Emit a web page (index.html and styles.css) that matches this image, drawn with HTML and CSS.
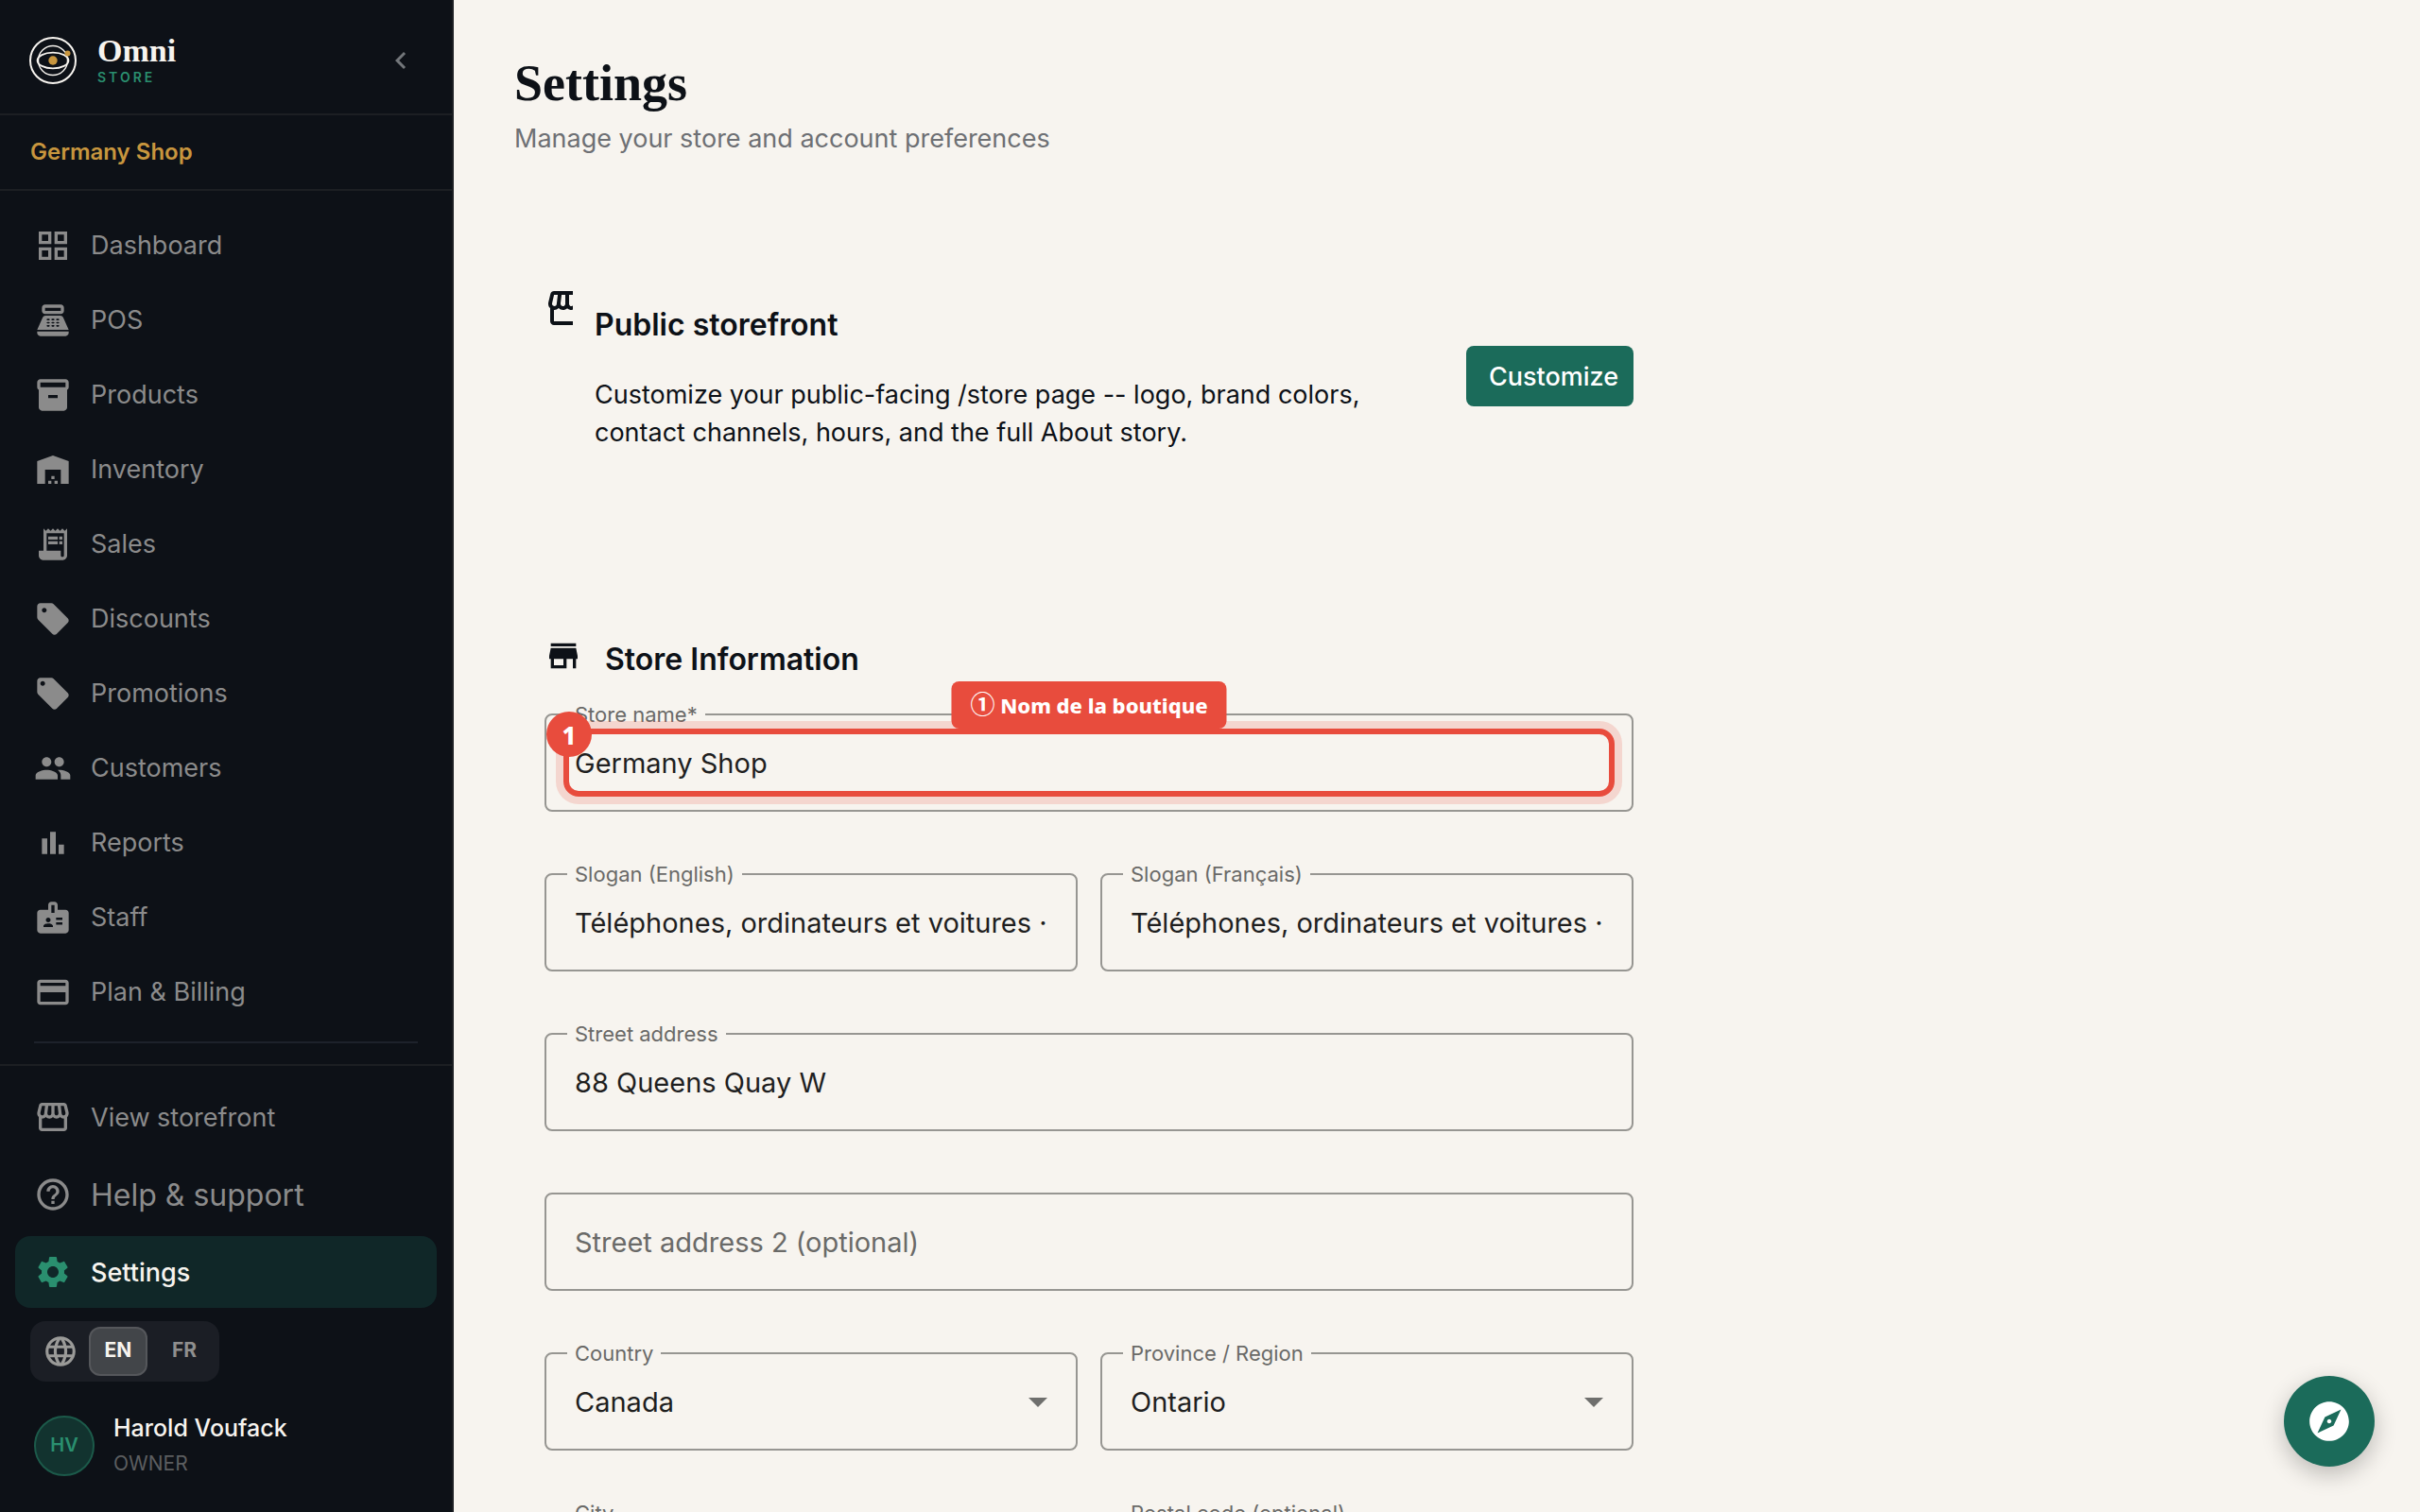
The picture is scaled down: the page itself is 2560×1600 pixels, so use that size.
FILE: index.html
```html
<!DOCTYPE html>
<html lang="en">
<head>
<meta charset="utf-8">
<title>Settings - Omni Store</title>
<link rel="stylesheet" href="styles.css">
</head>
<body>
<div class="app">
  <aside class="sidebar">
    <header class="brand">
      <svg class="brand-logo" viewBox="0 0 50 50" fill="none" stroke="#f7f4ef" aria-hidden="true">
        <circle cx="25" cy="25" r="24" stroke-width="2"/>
        <circle cx="25" cy="25" r="15.5" stroke-width="1.4"/>
        <ellipse cx="25" cy="25" rx="16.5" ry="8.3" stroke-width="1.7"/>
        <circle cx="25" cy="25" r="4.7" fill="#c8963e" stroke="none"/>
        <circle cx="40.5" cy="17.5" r="3" fill="#c8963e" stroke="none"/>
      </svg>
      <div class="brand-text">
        <span class="brand-name">Omni</span>
        <span class="brand-sub">STORE</span>
      </div>
      <button class="collapse" type="button" aria-label="Collapse sidebar">
        <svg class="icon-chevron" viewBox="0 0 24 24"><path d="M15.41 7.41L14 6l-6 6 6 6 1.41-1.41L10.83 12z"/></svg>
      </button>
    </header>
    <div class="shop">Germany Shop</div>
    <nav class="nav" aria-label="Main">
      <a class="nav-item" href="#"><svg class="icon" viewBox="0 0 24 24"><path d="M3 3v8h8V3H3zm6 6H5V5h4v4zm-6 4v8h8v-8H3zm6 6H5v-4h4v4zm4-16v8h8V3h-8zm6 6h-4V5h4v4zm-6 4v8h8v-8h-8zm6 6h-4v-4h4v4z"/></svg>Dashboard</a>
      <a class="nav-item" href="#"><svg class="icon" viewBox="0 0 24 24"><path d="M17 2H7c-1.100 0-2 .9-2 2v2c0 1.100.9 2 2 2h10c1.100 0 2-.9 2-2V4c0-1.100-.9-2-2-2zm0 4H7V4h10v2zM20 22H4c-1.100 0-2-.9-2-2v-1h20v1c0 1.100-.9 2-2 2zM18.530 10.190C18.210 9.470 17.490 9 16.700 9H7.300c-.79 0-1.510.47-1.830 1.190L2 18h20l-3.470-7.810zM9.500 16h-1c-.28 0-.5-.22-.5-.5s.22-.5.5-.5h1c.28 0 .5.22.5.5s-.22.5-.5.5zm0-2h-1c-.28 0-.5-.22-.5-.5s.22-.5.5-.5h1c.28 0 .5.22.5.5s-.22.5-.5.5zm0-2h-1c-.28 0-.5-.22-.5-.5s.22-.5.5-.5h1c.28 0 .5.22.5.5s-.22.5-.5.5zm3 4h-1c-.28 0-.5-.22-.5-.5s.22-.5.5-.5h1c.28 0 .5.22.5.5s-.22.5-.5.5zm0-2h-1c-.28 0-.5-.22-.5-.5s.22-.5.5-.5h1c.28 0 .5.22.5.5s-.22.5-.5.5zm0-2h-1c-.28 0-.5-.22-.5-.5s.22-.5.5-.5h1c.28 0 .5.22.5.5s-.22.5-.5.5zm3 4h-1c-.28 0-.5-.22-.5-.5s.22-.5.5-.5h1c.28 0 .5.22.5.5s-.22.5-.5.5zm0-2h-1c-.28 0-.5-.22-.5-.5s.22-.5.5-.5h1c.28 0 .5.22.5.5s-.22.5-.5.5zm0-2h-1c-.28 0-.5-.22-.5-.5s.22-.5.5-.5h1c.28 0 .5.22.5.5s-.22.5-.5.5z"/></svg>POS</a>
      <a class="nav-item" href="#"><svg class="icon" viewBox="0 0 24 24"><path d="M20 2H4c-1 0-2 .9-2 2v3.010c0 .72.43 1.340 1 1.690V20c0 1.100 1.100 2 2 2h14c.9 0 2-.9 2-2V8.700c.57-.35 1-.97 1-1.690V4c0-1.100-1-2-2-2zm-5 12H9v-2h6v2zm5-7H4V4h16v3z"/></svg>Products</a>
      <a class="nav-item" href="#"><svg class="icon" viewBox="0 0 24 24"><path d="M2 21V6.600L12 3l10 3.600V21h-5v-9H7v9zM11 16h2v2h-2zM9 19h2v2H9zM13 19h2v2h-2z"/></svg>Inventory</a>
      <a class="nav-item" href="#"><svg class="icon" viewBox="0 0 24 24"><path d="M19.500 3.500L18 2l-1.500 1.500L15 2l-1.500 1.500L12 2l-1.500 1.500L9 2 7.500 3.500 6 2v14H3v3c0 1.660 1.340 3 3 3h12c1.660 0 3-1.340 3-3V2l-1.500 1.500zM19 19c0 .55-.45 1-1 1s-1-.45-1-1v-3H8V5h11v14zM9 7h6v2H9zM16 7h2v2h-2zM9 10h6v2H9zM16 10h2v2h-2z"/></svg>Sales</a>
      <a class="nav-item" href="#"><svg class="icon" viewBox="0 0 24 24"><path d="M21.410 11.580l-9-9C12.050 2.220 11.550 2 11 2H4c-1.100 0-2 .9-2 2v7c0 .55.22 1.050.59 1.420l9 9c.36.36.86.58 1.410.58s1.050-.22 1.410-.59l7-7c.37-.36.59-.86.59-1.410s-.23-1.060-.59-1.420zM6.500 8C5.670 8 5 7.330 5 6.500S5.670 5 6.500 5 8 5.670 8 6.500 7.330 8 6.500 8z"/></svg>Discounts</a>
      <a class="nav-item" href="#"><svg class="icon" viewBox="0 0 24 24"><path d="M21.410 11.580l-9-9C12.050 2.220 11.550 2 11 2H4c-1.100 0-2 .9-2 2v7c0 .55.22 1.050.59 1.420l9 9c.36.36.86.58 1.410.58s1.050-.22 1.410-.59l7-7c.37-.36.59-.86.59-1.410s-.23-1.060-.59-1.420zM5.500 7C4.670 7 4 6.330 4 5.500S4.670 4 5.500 4 7 4.670 7 5.500 6.330 7 5.500 7z"/></svg>Promotions</a>
      <a class="nav-item" href="#"><svg class="icon" viewBox="0 0 24 24"><path d="M16 11c1.660 0 2.990-1.340 2.990-3S17.660 5 16 5s-3 1.340-3 3 1.340 3 3 3zm-8 0c1.660 0 2.990-1.340 2.990-3S9.660 5 8 5 5 6.340 5 8s1.340 3 3 3zm0 2c-2.330 0-7 1.170-7 3.500V19h14v-2.500c0-2.330-4.670-3.500-7-3.500zm8 0c-.29 0-.62.02-.97.05 1.160.84 1.970 1.970 1.970 3.450V19h6v-2.500c0-2.330-4.670-3.500-7-3.500z"/></svg>Customers</a>
      <a class="nav-item" href="#"><svg class="icon" viewBox="0 0 24 24"><path d="M5 9.200h3.400V19H5zM10.200 5h3.600v14h-3.600zM15.600 13H19v6h-3.400z"/></svg>Reports</a>
      <a class="nav-item" href="#"><svg class="icon" viewBox="0 0 24 24"><path d="M20 7h-5V4c0-1.100-.9-2-2-2h-2c-1.100 0-2 .9-2 2v3H4c-1.100 0-2 .9-2 2v11c0 1.100.9 2 2 2h16c1.100 0 2-.9 2-2V9c0-1.100-.9-2-2-2zM9 12c.83 0 1.500.67 1.500 1.500S9.830 15 9 15s-1.500-.67-1.500-1.500S8.170 12 9 12zm3 6H6v-.75c0-1 2-1.500 3-1.500s3 .5 3 1.500V18zm1-9h-2V4h2v5zm5 7.500h-4V15h4v1.500zm0-3h-4V12h4v1.500z"/></svg>Staff</a>
      <a class="nav-item" href="#"><svg class="icon" viewBox="0 0 24 24"><path d="M20 4H4c-1.110 0-1.990.89-1.990 2L2 18c0 1.110.89 2 2 2h16c1.110 0 2-.89 2-2V6c0-1.110-.89-2-2-2zm0 14H4v-6h16v6zm0-10H4V6h16v2z"/></svg>Plan &amp; Billing</a>
      <hr class="nav-divider">
    </nav>
    <div class="sidebar-foot">
      <nav class="foot-nav" aria-label="Secondary">
        <a class="nav-item" href="#"><svg class="icon" viewBox="0 0 24 24"><use href="#storefront"/></svg>View storefront</a>
        <a class="nav-item nav-help" href="#"><svg class="icon" viewBox="0 0 24 24"><path d="M11 18h2v-2h-2v2zm1-16C6.480 2 2 6.480 2 12s4.480 10 10 10 10-4.480 10-10S17.520 2 12 2zm0 18c-4.410 0-8-3.590-8-8s3.590-8 8-8 8 3.590 8 8-3.590 8-8 8zm0-14c-2.210 0-4 1.790-4 4h2c0-1.100.9-2 2-2s2 .9 2 2c0 2-3 1.750-3 5h2c0-2.250 3-2.500 3-5 0-2.210-1.790-4-4-4z"/></svg>Help &amp; support</a>
        <a class="nav-item active" href="#" aria-current="page"><svg class="icon" viewBox="0 0 24 24"><path d="M19.140 12.940c.04-.3.06-.61.06-.94 0-.32-.02-.64-.07-.94l2.030-1.580c.18-.14.23-.41.12-.61l-1.920-3.320c-.12-.22-.37-.29-.59-.22l-2.390.96c-.5-.38-1.030-.7-1.620-.94l-.36-2.540c-.04-.24-.24-.41-.48-.41h-3.840c-.24 0-.43.17-.47.41l-.36 2.540c-.59.24-1.130.57-1.620.94l-2.390-.96c-.22-.08-.47 0-.59.22L2.740 8.870c-.12.21-.08.47.12.61l2.030 1.580c-.05.3-.09.63-.09.94s.02.64.07.94l-2.030 1.580c-.18.14-.23.41-.12.61l1.920 3.320c.12.22.37.29.59.22l2.390-.96c.5.38 1.030.7 1.620.94l.36 2.540c.05.24.24.41.48.41h3.840c.24 0 .44-.17.47-.41l.36-2.540c.59-.24 1.130-.56 1.620-.94l2.390.96c.22.08.47 0 .59-.22l1.920-3.320c.12-.22.07-.47-.12-.61l-2.010-1.580zM12 15.600c-1.980 0-3.600-1.620-3.600-3.600s1.620-3.600 3.600-3.600 3.600 1.620 3.600 3.600-1.620 3.600-3.600 3.600z"/></svg>Settings</a>
      </nav>
      <div class="lang" role="group" aria-label="Language">
        <svg class="icon lang-icon" viewBox="0 0 24 24"><path d="M11.990 2C6.470 2 2 6.480 2 12s4.470 10 9.990 10C17.520 22 22 17.520 22 12S17.520 2 11.990 2zm6.930 6h-2.950c-.32-1.250-.78-2.450-1.380-3.560 1.840.63 3.370 1.910 4.330 3.560zM12 4.040c.83 1.200 1.480 2.530 1.910 3.960h-3.820c.43-1.430 1.080-2.760 1.910-3.960zM4.260 14C4.100 13.360 4 12.690 4 12s.1-1.360.26-2h3.380c-.08.66-.14 1.320-.14 2 0 .68.06 1.340.14 2H4.260zm.82 2h2.950c.32 1.250.78 2.450 1.380 3.560-1.840-.63-3.370-1.900-4.330-3.560zm2.950-8H5.080c.96-1.660 2.490-2.930 4.330-3.560C8.810 5.550 8.350 6.750 8.030 8zM12 19.960c-.83-1.200-1.480-2.530-1.910-3.960h3.820c-.43 1.430-1.080 2.760-1.910 3.960zM14.340 14H9.660c-.09-.66-.16-1.320-.16-2 0-.68.07-1.350.16-2h4.680c.09.65.16 1.320.16 2 0 .68-.07 1.340-.16 2zm.25 5.560c.6-1.110 1.060-2.310 1.380-3.560h2.950c-.96 1.650-2.490 2.930-4.330 3.560zM16.360 14c.08-.66.14-1.320.14-2 0-.68-.06-1.340-.14-2h3.380c.16.64.26 1.310.26 2s-.1 1.360-.26 2h-3.380z"/></svg>
        <div class="lang-buttons">
          <button class="lang-btn on" type="button" aria-pressed="true">EN</button>
          <button class="lang-btn" type="button" aria-pressed="false">FR</button>
        </div>
      </div>
      <div class="user">
        <span class="avatar">HV</span>
        <div class="user-text">
          <span class="user-name">Harold Voufack</span>
          <span class="user-role">OWNER</span>
        </div>
      </div>
    </div>
  </aside>

  <main class="main">
    <div class="content">
      <header class="page-head">
        <h1 class="title">Settings</h1>
        <p class="subtitle">Manage your store and account preferences</p>
      </header>

      <section class="storefront">
        <div class="storefront-icon"><svg viewBox="0 0 24 24" width="48" height="48"><path id="storefront" d="M21.900 8.890l-1.050-4.370c-.22-.9-1-1.520-1.910-1.520H5.050c-.9 0-1.690.63-1.900 1.520L2.100 8.890c-.24 1.020-.02 2.060.62 2.880.08.11.19.19.28.29V19c0 1.100.9 2 2 2h14c1.100 0 2-.9 2-2v-6.940c.09-.09.2-.18.28-.28.64-.82.87-1.870.62-2.890zm-2.990-3.900l1.050 4.370c.1.42.01.84-.25 1.170-.14.18-.44.47-.94.47-.61 0-1.140-.49-1.210-1.140L16.980 5l1.930-.01zM13 5h1.960l.54 4.520c.05.39-.07.78-.33 1.070-.22.26-.54.41-.95.41-.67 0-1.220-.59-1.220-1.310V5zM8.490 9.520L9.040 5H11v4.690c0 .72-.55 1.310-1.290 1.310-.34 0-.65-.15-.89-.41-.25-.29-.37-.68-.33-1.070zm-4.450-.16L5.050 5h1.970l-.58 4.860c-.08.65-.6 1.140-1.210 1.140-.49 0-.8-.29-.93-.47-.27-.32-.36-.75-.26-1.170zM5 19v-6.030c.08.01.15.03.23.03.87 0 1.660-.36 2.240-.95.6.6 1.400.95 2.310.95.87 0 1.650-.36 2.230-.93.59.57 1.390.93 2.290.93.84 0 1.640-.35 2.240-.95.58.59 1.370.95 2.240.95.08 0 .15-.02.23-.03V19H5z"/></svg></div>
        <div class="storefront-text">
          <h2 class="section-title">Public storefront</h2>
          <p class="storefront-desc">Customize your public-facing /store page -- logo, brand colors, contact channels, hours, and the full About story.</p>
        </div>
        <button class="btn" type="button">Customize</button>
      </section>

      <section class="info">
        <div class="info-head">
          <svg class="icon" viewBox="0 0 24 24"><path d="M20 4H4v2h16V4zm1 10v-2l-1-5H4l-1 5v2h1v6h10v-6h4v6h2v-6h1zm-9 4H6v-4h6v4z"/></svg>
          <h2 class="section-title">Store Information</h2>
        </div>
        <form class="form">
          <div class="field wide">
            <input class="control" id="name" type="text" value="Germany Shop" required>
            <label class="label" for="name">Store name*</label>
            <div class="ring"></div>
            <span class="ring-badge">1</span>
            <span class="ring-tip"><span class="ring-num">①</span> Nom de la boutique</span>
          </div>
          <div class="field">
            <input class="control" id="slogan-en" type="text" value="Téléphones, ordinateurs et voitures ·">
            <label class="label" for="slogan-en">Slogan (English)</label>
          </div>
          <div class="field">
            <input class="control" id="slogan-fr" type="text" value="Téléphones, ordinateurs et voitures ·">
            <label class="label" for="slogan-fr">Slogan (Français)</label>
          </div>
          <div class="field wide">
            <input class="control" id="street" type="text" value="88 Queens Quay W">
            <label class="label" for="street">Street address</label>
          </div>
          <div class="field wide">
            <input class="control" id="street2" type="text" placeholder="Street address 2 (optional)" aria-label="Street address 2 (optional)">
          </div>
          <div class="field select">
            <select class="control" id="country"><option>Canada</option></select>
            <label class="label" for="country">Country</label>
          </div>
          <div class="field select">
            <select class="control" id="region"><option>Ontario</option></select>
            <label class="label" for="region">Province / Region</label>
          </div>
          <div class="field">
            <input class="control" id="city" type="text">
            <label class="label" for="city">City</label>
          </div>
          <div class="field">
            <input class="control" id="postal" type="text">
            <label class="label" for="postal">Postal code (optional)</label>
          </div>
        </form>
      </section>
    </div>
  </main>

  <button class="fab" type="button" aria-label="Guide">
    <svg viewBox="0 0 24 24" width="50" height="50"><path d="M12 10.900c-.61 0-1.100.49-1.100 1.100s.49 1.100 1.100 1.100 1.100-.49 1.100-1.100-.49-1.100-1.100-1.100zM12 2C6.480 2 2 6.480 2 12s4.480 10 10 10 10-4.480 10-10S17.520 2 12 2zm2.190 12.190L6 18l3.810-8.190L18 6l-3.810 8.190z"/></svg>
  </button>
</div>
</body>
</html>
```
FILE: styles.css
```css
:root {
  --ink: #0d1117;
  --paper: #f7f4ef;
  --green: #1b6b5a;
  --line: #1c1f23;
  --muted: #8b8b8b;
  --red: #e84c3d;
}

* { box-sizing: border-box; }

body {
  margin: 0;
  background: var(--paper);
  color: var(--ink);
  font-family: Inter, "Liberation Sans", sans-serif;
  font-size: 27px;
}

h1, h2, p { margin: 0; }
button, input, select { font-family: inherit; margin: 0; }
svg { display: block; fill: currentColor; }

.app { display: flex; height: 100vh; }

/* Sidebar */
.sidebar {
  display: flex;
  flex-direction: column;
  flex: 0 0 480px;
  background: var(--ink);
  border-right: 2px solid var(--line);
}

.brand {
  display: flex;
  align-items: center;
  height: 122px;
  padding: 8px 36px 0 31px;
  border-bottom: 2px solid var(--line);
}
.brand-logo { width: 50px; height: 50px; margin-right: 22px; fill: none; }
.brand-text { display: flex; flex-direction: column; flex: 1; padding-top: 2px; }
.brand-name {
  font: 700 34px/34px "Liberation Serif", serif;
  color: var(--paper);
}
.brand-sub {
  font-size: 14px;
  line-height: 22px;
  font-weight: 600;
  letter-spacing: 3px;
  color: #2a8f6f;
}
.collapse { padding: 0; border: 0; background: none; color: #72767a; }
.icon-chevron { width: 36px; height: 36px; }

.shop {
  height: 80px;
  padding-left: 32px;
  border-bottom: 2px solid var(--line);
  font-size: 24px;
  line-height: 78px;
  font-weight: 600;
  color: #c8963e;
}

.nav {
  display: flex;
  flex-direction: column;
  flex: 1;
  gap: 4px;
  padding: 20px 16px 0;
}
.nav-item {
  display: flex;
  align-items: center;
  gap: 20px;
  height: 75px;
  padding: 0 20px;
  border-radius: 16px;
  color: var(--muted);
  text-decoration: none;
}
.icon { width: 40px; height: 40px; flex: none; }
.nav-divider {
  width: 406px;
  margin: 11px 20px 0;
  border: 0;
  border-top: 2px solid #1d222b;
}

.sidebar-foot {
  padding: 16px 16px 32px;
  border-top: 2px solid var(--line);
}
.foot-nav { display: flex; flex-direction: column; gap: 4px; }
.foot-nav .nav-item { height: 76px; }
.foot-nav .nav-help { height: 80px; font-size: 32px; }
.foot-nav .active { background: #102728; color: var(--paper); font-weight: 500; }
.active .icon { color: #2a8f6f; }

.lang {
  display: flex;
  align-items: center;
  width: 200px;
  height: 64px;
  margin: 14px 16px 30px;
  padding: 0 6px 0 13px;
  border-radius: 16px;
  background: #1b1e25;
  color: #9a9a98;
}
.lang-icon { width: 38px; height: 38px; margin-right: 11px; }
.lang-buttons { display: flex; gap: 8px; }
.lang-btn {
  width: 62px;
  height: 52px;
  padding: 0 0 4px;
  border: 2px solid transparent;
  border-radius: 12px;
  background: none;
  font-size: 21px;
  font-weight: 700;
  color: #8f8f8e;
}
.lang-btn.on { background: #424549; border-color: #55575b; color: var(--paper); }

.user { display: flex; align-items: center; gap: 20px; padding-left: 20px; }
.avatar {
  width: 64px;
  height: 64px;
  border: 2px solid #1c5a4a;
  border-radius: 50%;
  background: #12332f;
  font-size: 20px;
  line-height: 58px;
  font-weight: 600;
  text-align: center;
  color: #2a8f6f;
}
.user-text { display: flex; flex-direction: column; }
.user-name { font-size: 25px; line-height: 38px; font-weight: 500; color: var(--paper); }
.user-role { font-size: 21px; line-height: 38px; color: #5c5e60; }

/* Main column */
.main { flex: 1; overflow-y: auto; scrollbar-width: none; padding: 56px 64px; }
.content { max-width: 1216px; }
.title { font: 700 54px/64px "Liberation Serif", serif; }
.subtitle { margin-top: 7px; line-height: 40px; color: #6e7074; }

.storefront {
  display: flex;
  align-items: center;
  margin-top: 135px;
  padding: 0 32px;
}
.storefront-icon { align-self: flex-start; width: 30px; overflow: hidden; }
.storefront-text { flex: 1; padding: 22px 32px 16px 23px; }
.section-title { font-size: 32px; line-height: 40px; font-weight: 600; }
.storefront-desc { margin-top: 34px; line-height: 40px; }
.btn {
  height: 64px;
  padding: 0 16px 0 24px;
  border: 0;
  border-radius: 8px;
  background: var(--green);
  font-size: 27px;
  font-weight: 500;
  color: #fff;
}

.info { margin-top: 180px; padding: 0 32px; }
.info-head { display: flex; gap: 24px; }
.info-head .section-title { padding-top: 4px; }

.form {
  display: grid;
  grid-template-columns: 1fr 1fr;
  gap: 65px 24px;
  margin-top: 37px;
}
.field { position: relative; }
.wide { grid-column: 1 / -1; }
.control {
  display: block;
  width: 100%;
  height: 104px;
  padding: 0 30px;
  border: 2px solid #979692;
  border-radius: 8px;
  background: none;
  font-size: 29px;
  color: #1f1f1f;
  outline: 0;
  appearance: none;
}
.control::placeholder { color: #6a6a68; opacity: 1; }
.label {
  position: absolute;
  top: -14px;
  left: 24px;
  padding: 0 8px;
  background: var(--paper);
  font-size: 22px;
  line-height: 30px;
  color: #6a6a68;
}
.select::after {
  content: "";
  position: absolute;
  top: 48px;
  right: 32px;
  border: 10px solid transparent;
  border-top-color: #6f6f6d;
  border-bottom: 0;
  pointer-events: none;
}

/* Guided-tour highlight over the store name field */
.ring {
  position: absolute;
  inset: 16px 20px;
  border: 6px solid var(--red);
  border-radius: 16px;
  box-shadow: 0 0 0 8px rgba(232, 76, 61, 0.18);
  pointer-events: none;
}
.ring-badge {
  position: absolute;
  top: -2px;
  left: 2px;
  width: 48px;
  height: 48px;
  border-radius: 50%;
  background: var(--red);
  font: 800 26px/50px "Noto Sans", sans-serif;
  text-align: center;
  color: #fff;
}
.ring-tip {
  position: absolute;
  top: -34px;
  left: 50%;
  transform: translateX(-50%);
  padding: 0 20px;
  border-radius: 8px;
  background: var(--red);
  font: 800 22px/50px "Noto Sans", sans-serif;
  white-space: nowrap;
  color: #fff;
}
.ring-num { font: 700 26px/40px "Noto Sans CJK JP", sans-serif; }

.fab {
  position: fixed;
  right: 48px;
  bottom: 48px;
  display: grid;
  place-items: center;
  width: 96px;
  height: 96px;
  padding: 0;
  border: 0;
  border-radius: 50%;
  background: var(--green);
  color: #fff;
  box-shadow: 0 8px 24px rgba(0, 0, 0, 0.24);
}
```
